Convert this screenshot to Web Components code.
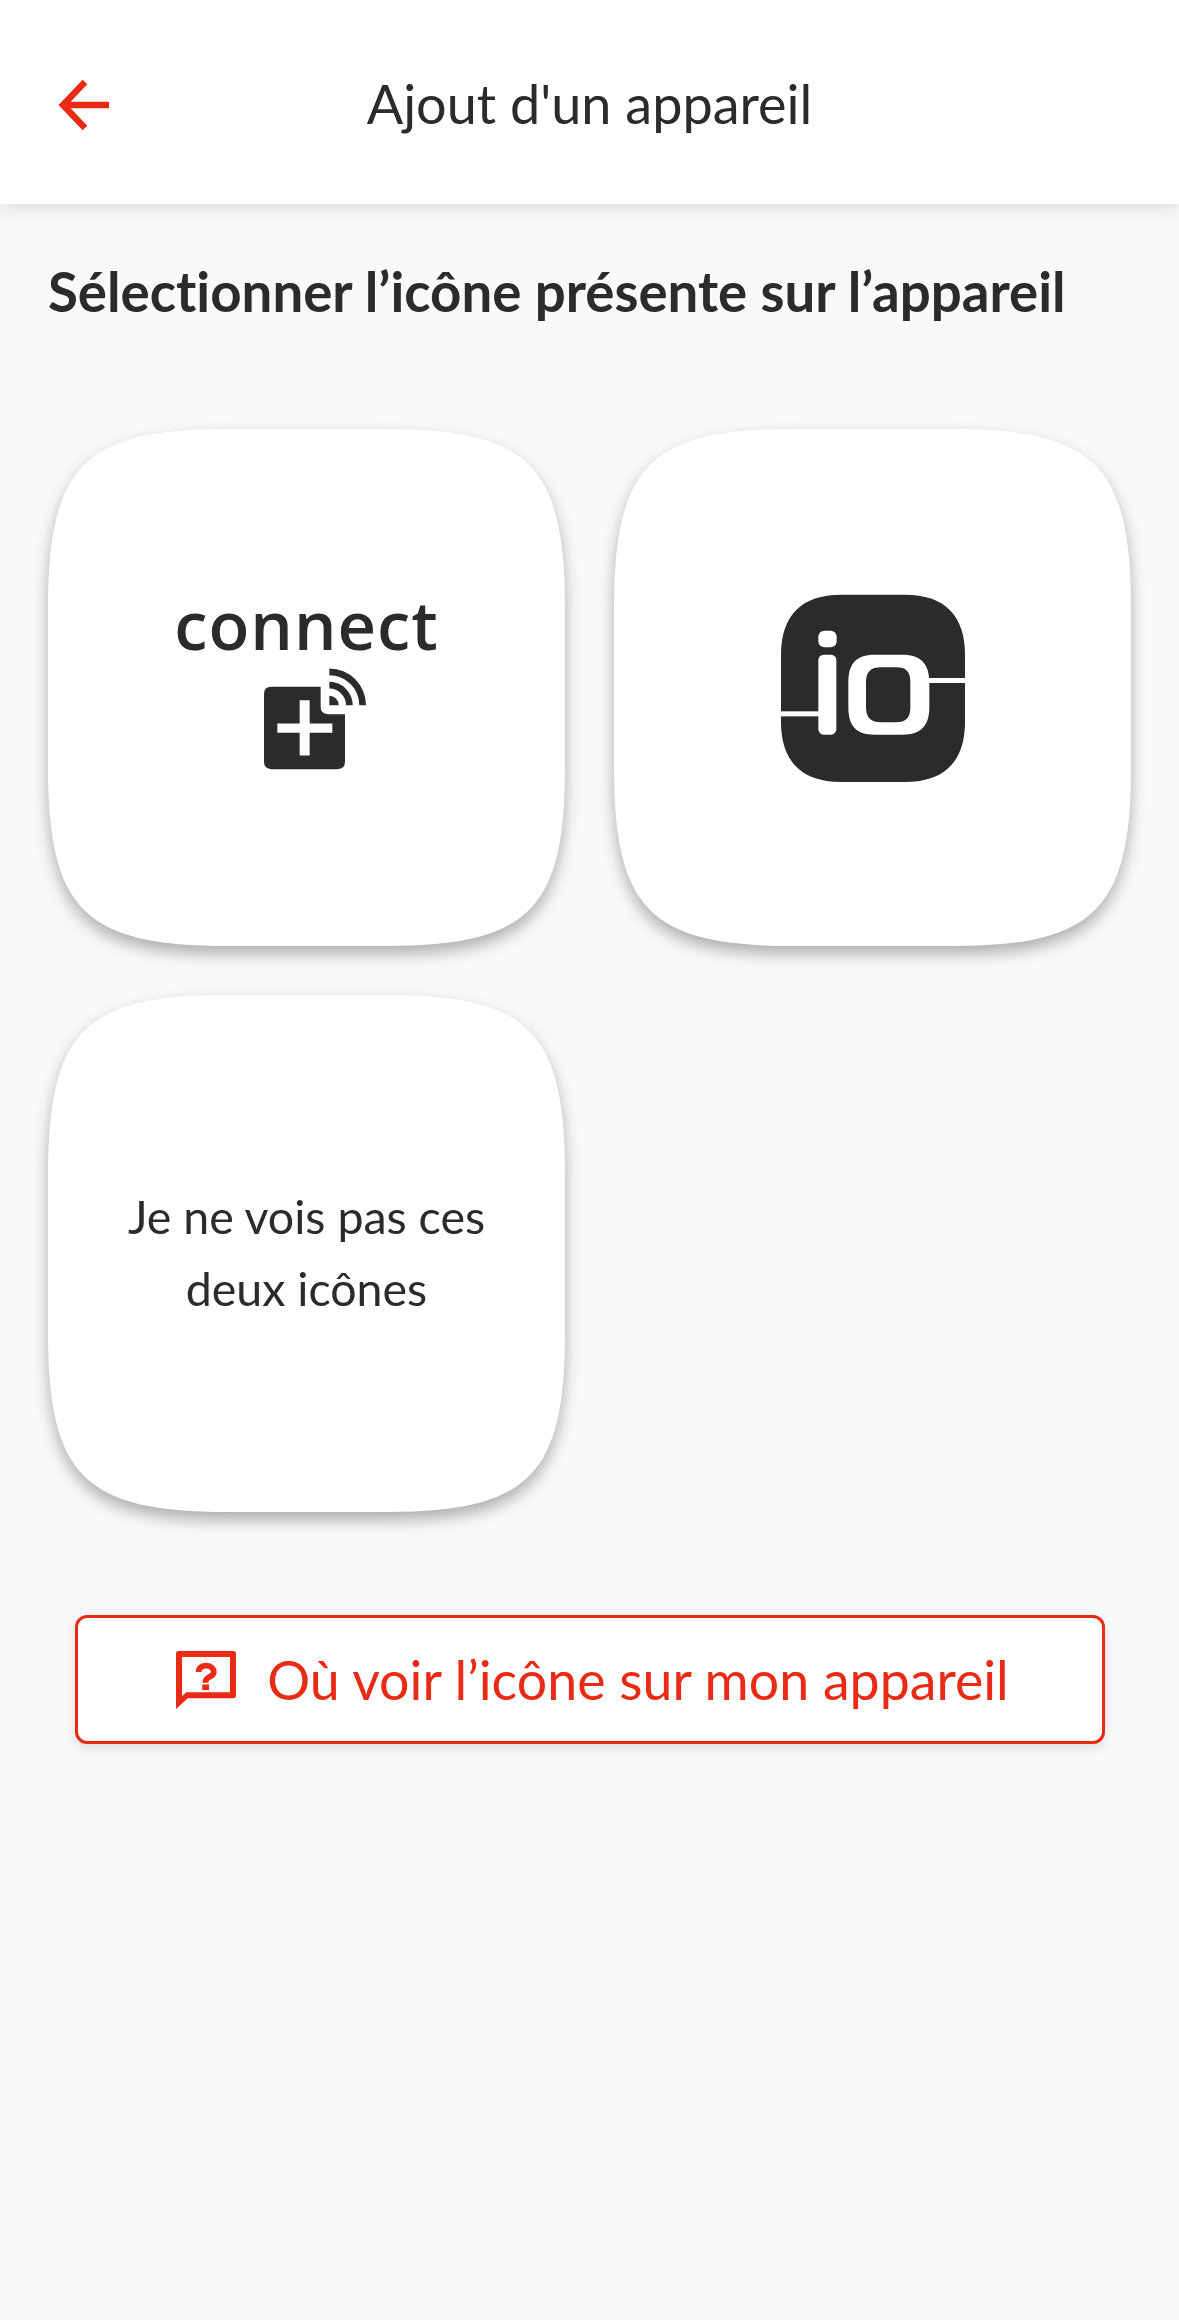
<!DOCTYPE html>
<html lang="fr">
<head>
<meta charset="utf-8">
<title>Ajout d'un appareil</title>
<style>
  html, body { margin: 0; height: 100%; }
  body {
    background: #f8f9fb;
    color: #2b2b2b;
    font-family: Lato, "Liberation Sans", sans-serif;
    font-variant-ligatures: none;
  }
</style>
</head>
<body>
<add-device-page></add-device-page>

<script>
class AppHeader extends HTMLElement {
  constructor() {
    super();
    this.attachShadow({ mode: "open" });
  }

  connectedCallback() {
    this.shadowRoot.innerHTML = /* html */`
    <style>
      :host {
        display: grid;
        grid-template-columns: 1fr auto 1fr;
        align-items: center;
        height: 204px;
        background: #fff;
        box-shadow: 0 4px 18px rgba(0, 0, 0, .12);
        position: relative;
      }

      svg { margin: 6px 0 0 56px; display: block; }

      h1 {
        margin: 0;
        padding-top: 2px;
        font-size: 54px;
        font-weight: 400;
        color: #2b2b2b;
      }
    </style>
    <svg width="60" height="60" viewBox="0 0 60 60" fill="none" stroke="#e92a15" stroke-width="6.5">
      <path d="M7 30H53M29 7L7 30L29 53"/>
    </svg>
    <h1><slot></slot></h1>
    <span></span>`;
  }
}

class IconCard extends HTMLElement {
  constructor() {
    super();
    this.attachShadow({ mode: "open" });
  }

  connectedCallback() {
    this.shadowRoot.innerHTML = /* html */`
    <style>
      :host {
        display: block;
        width: 517px;
        height: 517px;
        filter: drop-shadow(0 8px 8px rgba(0, 0, 0, .3));
      }

      .shape {
        display: flex;
        flex-direction: column;
        align-items: center;
        justify-content: center;
        height: 100%;
        background: #fff;
        clip-path: path("M0 180C0 36 36 0 180 0H337C481 0 517 36 517 180V337C517 481 481 517 337 517H180C36 517 0 481 0 337Z");
      }
    </style>
    <div class="shape"><slot></slot></div>`;
  }
}

class HelpButton extends HTMLElement {
  constructor() {
    super();
    this.attachShadow({ mode: "open" });
  }

  connectedCallback() {
    this.shadowRoot.innerHTML = /* html */`
    <style>
      :host {
        display: flex;
        align-items: center;
        justify-content: center;
        gap: 31px;
        box-sizing: border-box;
        width: 1030px;
        height: 129px;
        margin: 0 auto;
        padding: 0 0 2px 6px;
        background: #fff;
        border: 3px solid #e92a15;
        border-radius: 12px;
        box-shadow: 0 5px 12px rgba(0, 0, 0, .1);
        color: #e92a15;
        font-size: 53.7px;
      }

      svg { display: block; flex: none; margin-top: 3px; }
    </style>
    <svg width="60" height="58" viewBox="350 160 178 172">
      <path fill="#e92a15" fill-rule="evenodd" d="M350 168Q350 160 358 160H520Q528 160 528 168V292Q528 300 520 300H385L350 332ZM368 178V294L380 282H510V178Z"/>
      <path fill="none" stroke="#e92a15" stroke-width="17" d="M417 222C417 196 462 198 462 222C462 240 437 232 437 254"/>
      <path fill="#e92a15" d="M428 259h20v17h-20z"/>
    </svg>
    <span><slot></slot></span>`;
  }
}

class ConnectLogo extends HTMLElement {
  constructor() {
    super();
    this.attachShadow({ mode: "open" });
  }

  connectedCallback() {
    this.shadowRoot.innerHTML = /* html */`
    <style>
      :host {
        display: flex;
        flex-direction: column;
        align-items: center;
        margin-top: -13px;
      }

      span {
        font-family: "Open Sans", sans-serif;
        font-size: 67px;
        font-weight: 600;
        line-height: 62px;
        letter-spacing: 1px;
        color: #2b2b2b;
      }

      svg { display: block; margin: 13px 0 0 18px; }
    </style>
    <span>connect</span>
    <svg width="102" height="102" viewBox="345 295 306 303" fill="#2b2b2b">
      <path d="M367 350H515V410Q515 432 537 432H588V575Q588 597 566 597H367Q345 597 345 575V372Q345 350 367 350Z"/>
      <path fill="#fff" d="M385 460h67v-70h30v70h68v28h-68v68h-30v-68h-67z"/>
      <path d="M541 377A28 28 0 0 1 569 405H541Z"/>
      <path d="M541 335A70 70 0 0 1 611 405H591A50 50 0 0 0 541 355Z"/>
      <path d="M541 295A110 110 0 0 1 651 405H631A90 90 0 0 0 541 315Z"/>
    </svg>`;
  }
}

class IoLogo extends HTMLElement {
  constructor() {
    super();
    this.attachShadow({ mode: "open" });
  }

  connectedCallback() {
    this.shadowRoot.innerHTML = /* html */`
    <style>
      :host { display: block; }
      svg { display: block; }
    </style>
    <svg width="184" height="188" viewBox="60 40 552 564">
      <path fill="#2b2b2b" d="M240 42H432C550 42 612 104 612 222V424C612 542 550 604 432 604H240C122 604 60 542 60 424V222C60 104 122 42 240 42Z"/>
      <g fill="#fff">
        <rect x="172" y="150" width="55" height="50" rx="18"/>
        <rect x="172" y="222" width="54" height="240" rx="16"/>
        <rect x="60" y="392" width="120" height="15"/>
        <rect x="495" y="292" width="117" height="15"/>
        <path fill-rule="evenodd" d="M340 222H425C480 222 505 250 505 305V380C505 435 480 462 425 462H340C285 462 262 435 262 380V305C262 250 285 222 340 222ZM360 260C330 260 315 272 315 305V380C315 412 330 425 360 425H405C435 425 448 412 448 380V305C448 272 435 260 405 260Z"/>
      </g>
    </svg>`;
  }
}

class AddDevicePage extends HTMLElement {
  constructor() {
    super();
    this.attachShadow({ mode: "open" });
  }

  connectedCallback() {
    this.shadowRoot.innerHTML = /* html */`
    <style>
      :host { display: block; }

      h2 {
        margin: 0;
        padding: 57px 0 0 48px;
        font-size: 54.6px;
        line-height: 60px;
        font-weight: 700;
        color: #2b2b2b;
      }

      .grid {
        display: grid;
        grid-template-columns: 517px 517px;
        gap: 49px;
        padding: 108px 0 0 48px;
      }

      .help { padding-top: 103px; }

      .none {
        margin: 0 0 3px;
        font-size: 46.5px;
        line-height: 72px;
        text-align: center;
      }
    </style>
    <app-header>Ajout d'un appareil</app-header>
    <h2>Sélectionner l’icône présente sur l’appareil</h2>
    <div class="grid">
      <icon-card><connect-logo></connect-logo></icon-card>
      <icon-card><io-logo></io-logo></icon-card>
      <icon-card><p class="none">Je ne vois pas ces<br>deux icônes</p></icon-card>
    </div>
    <div class="help">
      <help-button>Où voir l’icône sur mon appareil</help-button>
    </div>`;
  }
}

customElements.define("app-header", AppHeader);
customElements.define("icon-card", IconCard);
customElements.define("help-button", HelpButton);
customElements.define("connect-logo", ConnectLogo);
customElements.define("io-logo", IoLogo);
customElements.define("add-device-page", AddDevicePage);
</script>
</body>
</html>
